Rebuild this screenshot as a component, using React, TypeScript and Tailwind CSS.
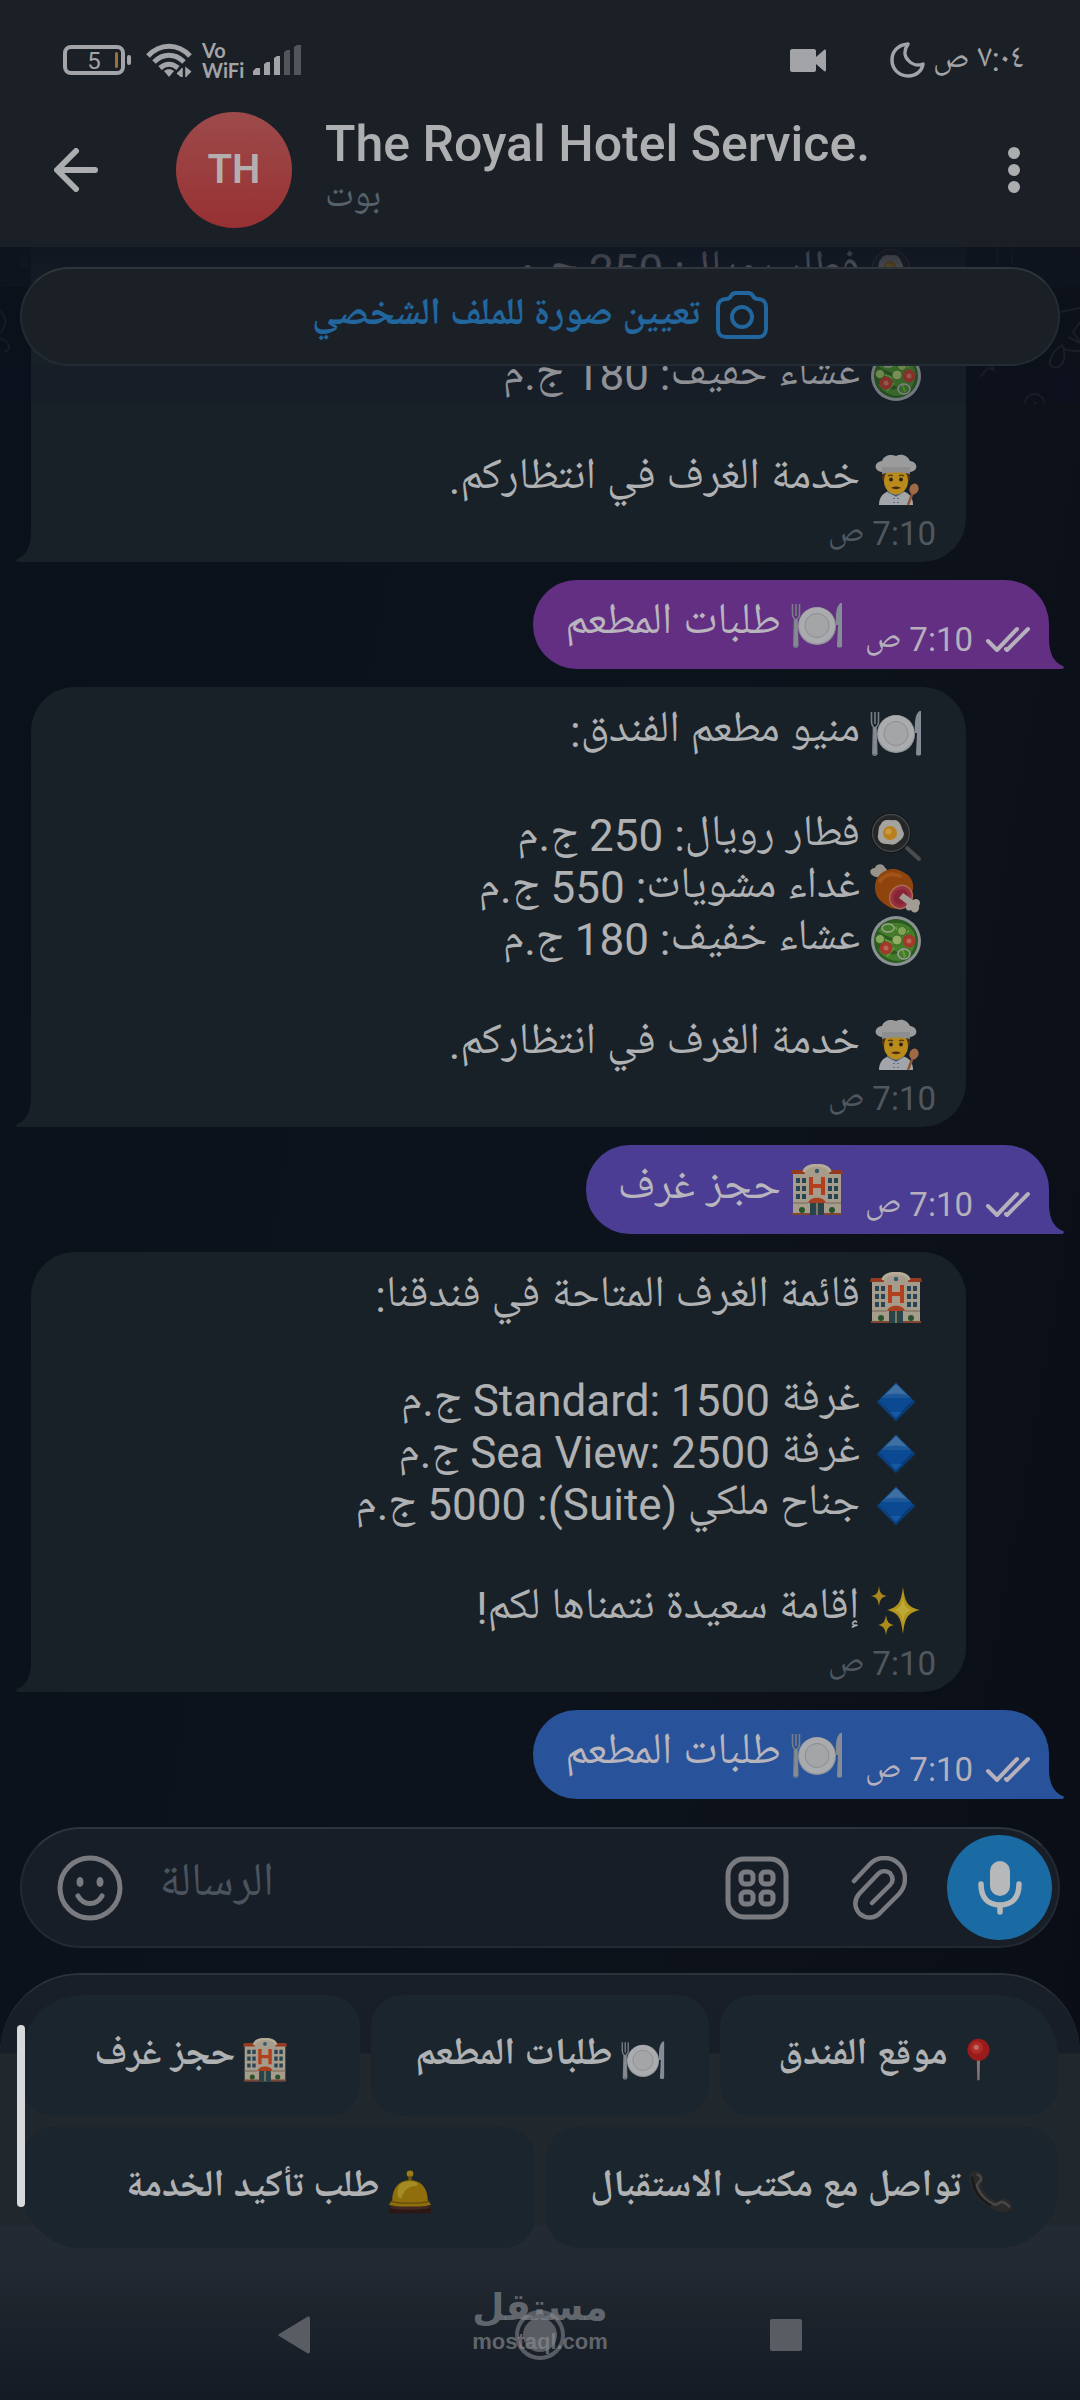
import React from "react";

type EmojiName =
  | "plate"
  | "egg"
  | "meat"
  | "salad"
  | "cook"
  | "hotel"
  | "diamond"
  | "sparkles"
  | "pin"
  | "phone"
  | "bell";

const drawings: Record<EmojiName, React.ReactNode> = {
  plate: (
    <>
      <circle cx="26" cy="27" r="19" fill="#94979a" />
      <circle cx="26" cy="26.500" r="18" fill="#a9abae" />
      <circle cx="26" cy="26.500" r="12" fill="#a3a5a6" stroke="#8b8e90" strokeWidth="1" />
      <path d="M1.500 5v10c0 3 1 4 2 5L2.800 46c0 3 4 3 4 0L6 20c1.500-1 2.500-2 2.500-5V5M5 5v12" fill="none" stroke="#777d85" strokeWidth="1.600" />
      <path d="M3.800 20h2.300l.8 27H3z" fill="#868b91" />
      <path d="M49.500 4c-4 3-5 9-4.500 22h2l-1 21c0 2 5 2 5 0V4z" fill="#858c96" />
    </>
  ),
  egg: (
    <>
      <path d="M37 37l12 11" stroke="#4b4c4e" strokeWidth="4" strokeLinecap="round" />
      <circle cx="21" cy="22" r="20" fill="#111214" />
      <circle cx="21" cy="22" r="18.500" fill="#252627" stroke="#424447" strokeWidth="1.500" />
      <path d="M11 13c3-6 9-3 13-4 6 0 7 6 9 11 3 5-2 9-6 12-4 3-7 1-11 1-6 0-9-5-8-9 1-5 0-8 3-11z" fill="#a4a39e" />
      <circle cx="20" cy="22" r="7" fill="#b9801d" />
      <circle cx="18.500" cy="20.500" r="3" fill="#c9993e" />
    </>
  ),
  meat: (
    <>
      <path d="M6 14C-2 12-1 5 5 5c1-5 9-5 10 0 4 1 1 7-2 10z" fill="#97938b" />
      <path d="M5 22C6 10 20 2 31 8c10 4 13 11 12 18-3 15-12 22-22 19C10 39 4 33 5 22z" fill="#8f430d" />
      <path d="M10 18c6-8 13-8 20-5" stroke="#a0541a" strokeWidth="4" fill="none" strokeLinecap="round" />
      <ellipse cx="31" cy="34" rx="11" ry="12" transform="rotate(38 31 34)" fill="#983040" stroke="#a86a50" strokeWidth="1.500" />
      <ellipse cx="31" cy="34" rx="7" ry="8" transform="rotate(38 31 34)" fill="#852434" />
      <path d="M33 30l10 7c5-3 9 2 6 6 1 6-5 9-8 4-4 2-7-2-4-6l-8-6z" fill="#a19d94" />
    </>
  ),
  salad: (
    <>
      <circle cx="26" cy="26" r="25" fill="#8a9293" />
      <circle cx="26" cy="26" r="22" fill="#2d5a20" />
      <path d="M8 16c7-8 13-9 21-8 8 1 15 6 16 13 2 10-4 20-12 24-9 3-20-2-25-11 7 2 12 8 20 4-5-5-11-4-17-11 6-1 12 3 16-2-6-3-12-4-19-9z" fill="#437d2a" />
      <path d="M25 12l6 7 8-3M17 41l7-8M35 42l-3-9M13 24l10 4" stroke="#629b38" strokeWidth="2" fill="none" />
      <circle cx="10" cy="24" r="4.500" fill="#86a65a" stroke="#396b26" />
      <circle cx="27" cy="25" r="5" fill="#93ad62" stroke="#396b26" />
      <circle cx="32" cy="16" r="4.500" fill="#84a255" stroke="#396b26" />
      <circle cx="16" cy="33" r="6.500" fill="#a2392d" />
      <circle cx="16" cy="33" r="2.500" fill="#b56a52" />
      <circle cx="39" cy="26" r="6.500" fill="#a2392d" />
      <circle cx="39" cy="26" r="2.500" fill="#b56a52" />
      <ellipse cx="34" cy="39" rx="6" ry="5" fill="none" stroke="#a39ba2" strokeWidth="1.500" />
      <ellipse cx="18" cy="13" rx="6" ry="4" fill="none" stroke="#99a389" strokeWidth="1.500" />
    </>
  ),
  cook: (
    <>
      <path d="M9 51c0-9 5-13 12-14h10c7 1 12 5 12 14z" fill="#a2a5a9" />
      <path d="M20 37l6 5 6-5v-6H20z" fill="#a47614" />
      <path d="M17 37l9 5 8-5M24 44v1M28 44v1M24 48v1M28 48v1" stroke="#3f5b83" strokeWidth="1.500" fill="none" />
      <path d="M13 18c-2 5-1 8 1 10h24c2-2 3-5 1-10z" fill="#4b3313" />
      <ellipse cx="26" cy="27" rx="12" ry="13.500" fill="#b98a1c" />
      <path d="M12 18C3 17 4 8 12 7 14 1 21 0 26 2c6-3 12 0 14 5 8 1 9 10 0 11z" fill="#9b9b9b" />
      <path d="M12 13h28v7c-8-2-20-2-28 0z" fill="#8d8e8f" />
      <path d="M18 22c1-1 4-1 5 0M29 22c1-1 4-1 5 0" stroke="#5b4012" strokeWidth="1.300" fill="none" />
      <circle cx="21" cy="25.500" r="1.900" fill="#2b2115" />
      <circle cx="31" cy="25.500" r="1.900" fill="#2b2115" />
      <path d="M21 34c3-2 7-2 10 0-3 1.500-7 1.500-10 0z" fill="#4b2c12" />
      <path d="M38 51l5-13" stroke="#8d5534" strokeWidth="2.500" />
      <ellipse cx="44" cy="35" rx="4.500" ry="5.500" transform="rotate(20 44 35)" fill="#a06a47" />
    </>
  ),
  hotel: (
    <>
      <path d="M2 8h12c1-8 23-8 24 0h12v43H2z" fill="#a69c8b" />
      <path d="M1 6h12l1 4H0zM39 6h12l1 4H38z" fill="#943a21" />
      <path d="M13 8C14-1 38-1 39 8" fill="none" stroke="#b6ab98" strokeWidth="3" />
      <circle cx="26" cy="7" r="2.200" fill="#34576c" />
      <path d="M20 13v18M32 13v18M20 22h12" stroke="#b2401f" strokeWidth="4" />
      <path d="M5 14h4v5H5zM11 14h4v5h-4zM5 22h4v5H5zM11 22h4v5h-4zM5 30h4v5H5zM11 30h4v5h-4zM37 14h4v5h-4zM43 14h4v5h-4zM37 22h4v5h-4zM43 22h4v5h-4zM37 30h4v5h-4zM43 30h4v5h-4z" fill="#274455" />
      <path d="M17 39c2-7 16-7 18 0z" fill="#a8401f" />
      <path d="M19 39h14v12H19z" fill="#29434b" />
      <path d="M26 39v12" stroke="#9a8b6f" strokeWidth="1.500" />
      <path d="M2 39h15M35 39h15" stroke="#857a6a" strokeWidth="1.500" />
      <circle cx="11" cy="46" r="3" fill="#28532a" />
      <circle cx="41" cy="46" r="3" fill="#28532a" />
      <path d="M1 50h18M33 50h18" stroke="#7d4630" strokeWidth="2" />
    </>
  ),
  diamond: (
    <>
      <path d="M26 7l19 19-19 19L7 26z" fill="#0b4a92" />
      <path d="M26 7l15 15H11z" fill="#1d5898" />
      <path d="M26 8l11 11q-11-3-22 0z" fill="#3f70a4" />
      <path d="M7 26l19 19v-4L10 25z" fill="#0a407f" />
      <path d="M45 26L26 45v-4l16-16z" fill="#083a76" />
      <path d="M20 36h12l-6 6z" fill="#1658a4" />
    </>
  ),
  sparkles: (
    <>
      <path d="M33 3c2 15 4 20 17 23-13 3-15 8-17 24-2-16-4-21-16-24 12-3 14-8 16-23z" fill="#b3941d" />
      <path d="M9 2c1 7 2 9 8 10-6 1-7 4-8 10-1-6-2-9-8-10 6-1 7-3 8-10z" fill="#a8861c" />
      <path d="M16 31c1 6 2 9 8 10-6 1-7 4-8 10-1-6-2-9-8-10 6-1 7-4 8-10z" fill="#ab891d" />
      <path d="M33 12c1 9 2 12 9 14-7 2-8 5-9 14-1-9-2-12-9-14 7-2 8-5 9-14z" fill="#bfa936" />
    </>
  ),
  pin: (
    <>
      <path d="M24.500 24h4l-.7 26h-2.600z" fill="#83756f" />
      <circle cx="26.500" cy="14" r="13" fill="#991b1b" />
      <circle cx="24.500" cy="11.500" r="7.500" fill="#ad2b28" />
      <circle cx="24" cy="11" r="3" fill="#c06a62" />
    </>
  ),
  phone: (
    <>
      <path d="M4 2c5-3 11 1 13 6 1 5-4 7-2 12 4 8 10 14 17 17 4 1 6-5 11-3 6 2 10 8 8 12-6 6-17 4-25-1C12 39 3 27 1 14 0 9 0 5 4 2z" fill="#2b2a2a" />
      <path d="M9 5c4 1 6 4 5 7-4 3-5 6-4 9 4 9 12 17 21 20 4 0 5-4 9-3 4 1 6 3 8 6" fill="none" stroke="#494745" strokeWidth="3" />
      <path d="M4 8c0 14 8 26 22 34" fill="none" stroke="#1a1a1a" strokeWidth="3" />
    </>
  ),
  bell: (
    <>
      <path d="M2 43h48l1 8H1z" fill="#2c1714" />
      <ellipse cx="26" cy="44" rx="24" ry="3" fill="#422722" />
      <circle cx="26" cy="4.500" r="4" fill="#9c7a16" />
      <path d="M24 7h4v7h-4z" fill="#6c5410" />
      <path d="M5 36C5 20 14 12 26 12s21 8 21 24l4 5c-8 3-42 3-50 0z" fill="#8f6e0b" />
      <path d="M14 17c5-4 14-5 20-2 3 2 1 4-3 4-6 0-13 6-15 14-5 2-7-9-2-16z" fill="#a38c22" />
      <path d="M3 37c12 3 34 3 46 0" stroke="#604a0c" strokeWidth="1.500" fill="none" />
    </>
  ),
};

function Emoji({ name, small = false }: { name: EmojiName; small?: boolean }) {
  return (
    <svg aria-hidden="true" viewBox="0 0 52 52" className={small ? "size-11 shrink-0" : "size-[52px] shrink-0"}>
      {drawings[name]}
    </svg>
  );
}

type Line = { emoji: EmojiName; text: string } | null;

function Incoming({ lines }: { lines: Line[] }) {
  return (
    <article className="relative ml-[31px] mr-[114px] rounded-[44px] rounded-bl-none bg-[#192128] pt-5 pr-11 pb-2 pl-8">
      <svg aria-hidden="true" viewBox="0 0 16 30" className="absolute bottom-0 -left-[15px] h-[30px] w-4 text-[#192128]">
        <path d="M16 0h-1C15 14 10 24 1 27c-2 1 0 3 1 3h14z" fill="currentColor" />
      </svg>
      <div dir="rtl" className="text-[44px] leading-[52px] text-[#b0b1b3]">
        {lines.map((line, i) =>
          line ? (
            <p key={i} className="flex h-[52px] items-center gap-2.5 whitespace-nowrap">
              <Emoji name={line.emoji} />
              <span className="pb-0.5">{line.text}</span>
            </p>
          ) : (
            <div key={i} className="h-[52px]" />
          ),
        )}
      </div>
      <time dir="rtl" className="-mr-3.5 mt-2 block h-10 text-[33px] leading-10 text-[#4f575f]">
        7:10 ص
      </time>
    </article>
  );
}

function Outgoing({ emoji, text, tone }: { emoji: EmojiName; text: string; tone: string }) {
  return (
    <article
      className={`relative mr-[31px] flex h-[89px] items-center self-end rounded-[44px] rounded-br-none pr-[18px] pl-8 ${tone}`}
    >
      <svg aria-hidden="true" viewBox="0 0 16 30" className="absolute -right-[15px] bottom-0 h-[30px] w-4">
        <path d="M0 0h1c0 14 5 24 14 27 2 1 0 3-1 3H0z" fill="currentColor" />
      </svg>
      <p dir="rtl" className="flex items-center gap-2.5 text-[44px] leading-[52px] whitespace-nowrap text-[#b8b5bd]">
        <Emoji name={emoji} />
        <span className="pb-0.5">{text}</span>
      </p>
      <time dir="rtl" className="mt-[30px] ml-[22px] h-10 text-[33px] leading-10 whitespace-nowrap text-[#b5b0bb]">
        7:10 ص
      </time>
      <svg aria-label="مقروءة" role="img" viewBox="0 0 46 28" className="mt-[30px] ml-3 h-7 w-[46px]" fill="none" stroke="#b5b0bb" strokeWidth="4" strokeLinecap="round" strokeLinejoin="round">
        <path d="M3 15l9 9L32 3M21 23l1 1L43 3" />
      </svg>
    </article>
  );
}

function Key({ emoji, text, corner }: { emoji: EmojiName; text: string; corner: string }) {
  return (
    <button
      type="button"
      dir="rtl"
      className={`flex h-[121px] min-w-0 flex-1 items-center justify-center gap-2 rounded-[32px] bg-[#1b252e] pt-2 text-[38px] leading-[52px] font-bold whitespace-nowrap text-[#afb1b3] ${corner}`}
    >
      <Emoji name={emoji} small />
      <span className="pb-2">{text}</span>
    </button>
  );
}

const menu: Line[] = [
  { emoji: "plate", text: "منيو مطعم الفندق:" },
  null,
  { emoji: "egg", text: "فطار رويال: 250 ج.م" },
  { emoji: "meat", text: "غداء مشويات: 550 ج.م" },
  { emoji: "salad", text: "عشاء خفيف: 180 ج.م" },
  null,
  { emoji: "cook", text: "خدمة الغرف في انتظاركم." },
];

const rooms: Line[] = [
  { emoji: "hotel", text: "قائمة الغرف المتاحة في فندقنا:" },
  null,
  { emoji: "diamond", text: "غرفة Standard: 1500 ج.م" },
  { emoji: "diamond", text: "غرفة Sea View: 2500 ج.م" },
  { emoji: "diamond", text: "جناح ملكي (Suite): 5000 ج.م" },
  null,
  { emoji: "sparkles", text: "إقامة سعيدة نتمناها لكم!" },
];

function StatusBar() {
  return (
    <div className="flex h-20 items-end justify-between pr-14 pl-[63px] text-[#a3a4a7]">
      <div className="flex h-10 items-center">
        <svg aria-label="5%" role="img" viewBox="0 0 68 30" className="h-[30px] w-[68px]">
          <rect x="2" y="2" width="58" height="26" rx="6" fill="none" stroke="currentColor" strokeWidth="4" />
          <rect x="52" y="7" width="3" height="16" rx="1.500" fill="#9a7434" />
          <rect x="64" y="10" width="4" height="10" rx="2" fill="currentColor" />
          <text x="31" y="24" textAnchor="middle" fontFamily="Roboto" fontSize="24" fill="currentColor">5</text>
        </svg>
        <svg aria-hidden="true" viewBox="0 0 46 34" className="ml-[15px] h-[34px] w-[46px]">
          <g fill="none" stroke="currentColor" strokeWidth="5" strokeLinecap="butt">
            <path d="M2 13C14 0 32 0 44 13" />
            <path d="M8 19c9-9 21-9 30 0" />
            <path d="M14 25c6-5 12-5 18 0" />
          </g>
          <path d="M18 28c3-2.500 7-2.500 10 0l-5 6z" fill="currentColor" />
          <path d="M36 25v9l-5-4M40 34v-9l5 4" fill="currentColor" stroke="currentColor" strokeWidth="1.500" />
        </svg>
        <div className="ml-2.5 flex w-[43px] flex-col font-[Lato,sans-serif] text-[20px] leading-5 font-bold">
          <span>Vo</span>
          <span>WiFi</span>
        </div>
        <svg aria-hidden="true" viewBox="0 0 48 30" className="ml-2 h-[30px] w-12" fill="currentColor">
          <path d="M0 30v-4l3-3h4v7zM11 30V19l3-2h3v13zM21 30V13l3-2h3v19z" />
          <path d="M31 30V7l3-2h3v25zM41 30V2l3-2h4v30z" fill="#52565b" />
        </svg>
      </div>
      <div className="flex h-10 items-center">
        <svg aria-hidden="true" viewBox="0 0 36 23" className="h-[23px] w-9" fill="currentColor">
          <path d="M2 0h22c1 0 2 1 2 2v6l8-7c1-1 2 0 2 1v19c0 1-1 2-2 1l-8-7v6c0 1-1 2-2 2H2c-1 0-2-1-2-2V2c0-1 1-2 2-2z" />
        </svg>
        <svg aria-hidden="true" viewBox="0 0 35 36" className="ml-16 h-9 w-[35px]" fill="none" stroke="currentColor" strokeWidth="3.500" strokeLinejoin="round">
          <path d="M18 2C7 3 2 10 2 18c0 9 7 16 16 16 8 0 14-5 15-12-5 2-11 1-15-4-4-4-4-10 0-16z" />
        </svg>
        <span dir="rtl" className="ml-2 text-[33px] leading-10 whitespace-nowrap">٧:٠٤ ص</span>
      </div>
    </div>
  );
}

export default function App() {
  return (
    <main className="flex h-screen min-h-[1400px] w-full flex-col overflow-hidden bg-[linear-gradient(100deg,#0b111a_0%,#0d131c_55%,#0a0d16_100%)] font-[Roboto,'Noto_Naskh_Arabic_UI','Noto_Naskh_Arabic','Noto_Sans_Arabic','DejaVu_Sans',sans-serif]">
      <header className="h-[247px] shrink-0 bg-[#1b1f26]">
        <StatusBar />
        <div className="flex h-[167px] items-center px-[54px] pt-5 pb-2">
          <button type="button" aria-label="رجوع" className="text-[#acadaf]">
            <svg viewBox="0 0 44 44" className="size-11" fill="none" stroke="currentColor" strokeWidth="6" strokeLinecap="round" strokeLinejoin="round">
              <path d="M41 22H4M22 3L3 22l19 19" />
            </svg>
          </button>
          <div className="ml-[78px] flex size-[116px] shrink-0 items-center justify-center rounded-full bg-linear-to-b from-[#9d4a4b] to-[#973032] text-[40px] font-semibold text-[#b5aeae]">
            TH
          </div>
          <div className="ml-[33px] flex min-w-0 flex-1 flex-col">
            <h1 className="text-[50px] leading-[58px] font-medium whitespace-nowrap text-[#aeafb1]">The Royal Hotel Service.</h1>
            <span lang="ar" className="text-[37px] leading-[52px] text-[#55626c]">بوت</span>
          </div>
          <button type="button" aria-label="المزيد" className="text-[#acadaf]">
            <svg viewBox="0 0 24 46" className="h-[46px] w-6" fill="currentColor">
              <circle cx="12" cy="6" r="6" />
              <circle cx="12" cy="23" r="6" />
              <circle cx="12" cy="40" r="6" />
            </svg>
          </button>
        </div>
      </header>

      <section className="relative flex min-h-0 flex-1 flex-col justify-end overflow-hidden pb-7">
        <svg aria-hidden="true" viewBox="0 0 100 160" className="absolute top-0 right-0 h-40 w-[100px]" fill="none" stroke="#191e29" strokeWidth="2">
          <path d="M17 0v18M32 0v18M0 130l8-9 6 2-4-8M82 98c-12 8-16 22-8 22 8 2 14-10 8-22zM82 98c2 6 8 6 18 6M80 65l20-4M100 75l-7 10 7 10M88 90l12 6M45 156c1-12 18-12 19 0M55 155v2" />
        </svg>
        <svg aria-hidden="true" viewBox="0 0 30 130" className="absolute top-0 left-0 h-[130px] w-[30px]" fill="none" stroke="#161c27" strokeWidth="2">
          <circle cx="24" cy="16" r="3" />
          <path d="M0 64c8 6 6 16 0 22M0 92c10 0 12 14 4 12" />
        </svg>
        <div className="flex shrink-0 flex-col gap-[18px]">
          <Incoming lines={menu} />
          <Outgoing emoji="plate" text="طلبات المطعم" tone="bg-[#622f83] text-[#622f83]" />
          <Incoming lines={menu} />
          <Outgoing emoji="hotel" text="حجز غرف" tone="bg-[#4a3d93] text-[#4a3d93]" />
          <Incoming lines={rooms} />
          <Outgoing emoji="plate" text="طلبات المطعم" tone="bg-[#28529a] text-[#28529a]" />
        </div>
        <div className="pointer-events-none absolute inset-x-0 top-0 h-10 bg-linear-to-b from-[#0f1420]/80 to-[#101722]/50" />
        <div className="pointer-events-none absolute inset-x-0 top-[119px] h-9 bg-[#0e1426]/20" />
        <button
          type="button"
          dir="rtl"
          className="absolute inset-x-5 top-5 flex h-[99px] items-center justify-center gap-4 rounded-full border-2 border-[#232b33] border-t-[#2f353b] bg-[#1b1f26] pb-1 text-[38px] font-bold text-[#22669e]"
        >
          <svg aria-hidden="true" viewBox="0 0 52 48" className="h-12 w-[52px]" fill="none" stroke="currentColor" strokeWidth="4" strokeLinejoin="round">
            <path d="M2 16c0-5 3-8 8-8 3 0 4-1 5-3 1-2 3-3 5-3h12c2 0 4 1 5 3 1 2 2 3 5 3 5 0 8 3 8 8v22c0 5-3 8-8 8H10c-5 0-8-3-8-8z" />
            <circle cx="26" cy="26" r="10" />
          </svg>
          <span className="pt-1">تعيين صورة للملف الشخصي</span>
        </button>
      </section>

      <form
        onSubmit={(e) => e.preventDefault()}
        className="mx-5 flex h-[121px] shrink-0 items-center rounded-full border-2 border-[#222932] border-t-[#2e343d] bg-[#181e27] pr-1.5 pl-[35px] text-[#797b80]"
      >
        <button type="button" aria-label="الرموز التعبيرية">
          <svg viewBox="0 0 66 66" className="size-[66px]">
            <circle cx="33" cy="33" r="30" fill="none" stroke="currentColor" strokeWidth="5" />
            <ellipse cx="23" cy="27" rx="3.500" ry="5" fill="currentColor" />
            <ellipse cx="43" cy="27" rx="3.500" ry="5" fill="currentColor" />
            <path d="M21 41c6 10 18 10 24 0" fill="none" stroke="currentColor" strokeWidth="5" strokeLinecap="round" />
          </svg>
        </button>
        <input
          aria-label="الرسالة"
          placeholder="الرسالة"
          className="ml-9 h-20 min-w-0 flex-1 bg-transparent pb-1.5 text-[47px] text-[#b0b1b3] outline-none placeholder:text-[#4a545e]"
        />
        <button type="button" aria-label="الأوامر">
          <svg viewBox="0 0 64 64" className="size-16" fill="none" stroke="currentColor">
            <rect x="3" y="3" width="58" height="58" rx="16" strokeWidth="5" />
            <rect x="16" y="16" width="12" height="12" rx="4" strokeWidth="5" />
            <rect x="36" y="16" width="12" height="12" rx="4" strokeWidth="5" />
            <rect x="16" y="36" width="12" height="12" rx="4" strokeWidth="5" />
            <rect x="36" y="36" width="12" height="12" rx="4" strokeWidth="5" />
          </svg>
        </button>
        <button type="button" aria-label="إرفاق" className="ml-[62px]">
          <svg viewBox="0 0 56 64" className="h-16 w-14" fill="none" stroke="currentColor" strokeWidth="4.500" strokeLinecap="round">
            <path d="M3 25L19 8C27 0 40 0 48 8s8 21 0 30L30 56c-6 7-15 7-21 2-6-6-6-14-1-20l19-20c4-4 9-3 12-1 3 4 4 8 0 12L21 47" />
          </svg>
        </button>
        <button type="button" aria-label="رسالة صوتية" className="ml-10 flex size-[105px] shrink-0 items-center justify-center rounded-full bg-[#1a6aa4] text-[#b7b8ba]">
          <svg viewBox="0 0 44 54" className="h-[54px] w-11">
            <rect x="12" y="0" width="20" height="35" rx="10" fill="currentColor" />
            <path d="M3 23c0 14 7 21 19 21s19-7 19-21M22 44v7" fill="none" stroke="currentColor" strokeWidth="5.500" strokeLinecap="round" />
          </svg>
        </button>
      </form>

      <footer className="relative mt-[25px] shrink-0 rounded-t-[80px] border-t-2 border-[#2b323b] bg-[linear-gradient(180deg,#181f28_0px,#181e28_78px,#20272d_79px,#20272d_250px,#232a34_251px,#222933_298px,#1d242c_330px,#19202a_375px,#141a24_425px)] pt-5">
        <div className="flex flex-col gap-[11px] px-[22px]">
          <div className="flex gap-[11px]">
            <Key emoji="hotel" text="حجز غرف" corner="rounded-tl-[60px]" />
            <Key emoji="plate" text="طلبات المطعم" corner="" />
            <Key emoji="pin" text="موقع الفندق" corner="rounded-tr-[60px]" />
          </div>
          <div className="flex gap-[11px]">
            <Key emoji="bell" text="طلب تأكيد الخدمة" corner="rounded-bl-[60px]" />
            <Key emoji="phone" text="تواصل مع مكتب الاستقبال" corner="rounded-br-[60px]" />
          </div>
        </div>
        <div className="absolute top-[50px] left-[17px] h-[182px] w-2 rounded-full bg-[#d8d9db]" />
        <nav className="relative flex h-[152px] items-center justify-between px-[278px] pt-[22px] text-[#595c63]">
          <button type="button" aria-label="رجوع">
            <svg viewBox="0 0 32 38" className="h-[38px] w-8" fill="currentColor">
              <path d="M29 1c1-1 3 0 3 1v34c0 1-2 2-3 1L1 20c-1-1-1-1 0-2z" />
            </svg>
          </button>
          <button type="button" aria-label="الرئيسية">
            <svg viewBox="0 0 50 50" className="size-[50px]">
              <circle cx="25" cy="25" r="23" fill="none" stroke="currentColor" strokeWidth="4" />
              <circle cx="25" cy="25" r="17" fill="currentColor" />
            </svg>
          </button>
          <button type="button" aria-label="التطبيقات الأخيرة">
            <svg viewBox="0 0 32 32" className="size-8" fill="currentColor">
              <rect width="32" height="32" rx="2" />
            </svg>
          </button>
          <div className="pointer-events-none absolute inset-x-0 top-[38px] flex flex-col items-center text-[#8b8f94]/65">
            <span className="font-['DejaVu_Sans',sans-serif] text-[37px] leading-[44px] font-bold">مستقل</span>
            <span className="font-['Liberation_Sans',sans-serif] text-[22px] leading-6 font-bold">mostaql.com</span>
          </div>
        </nav>
      </footer>
    </main>
  );
}
